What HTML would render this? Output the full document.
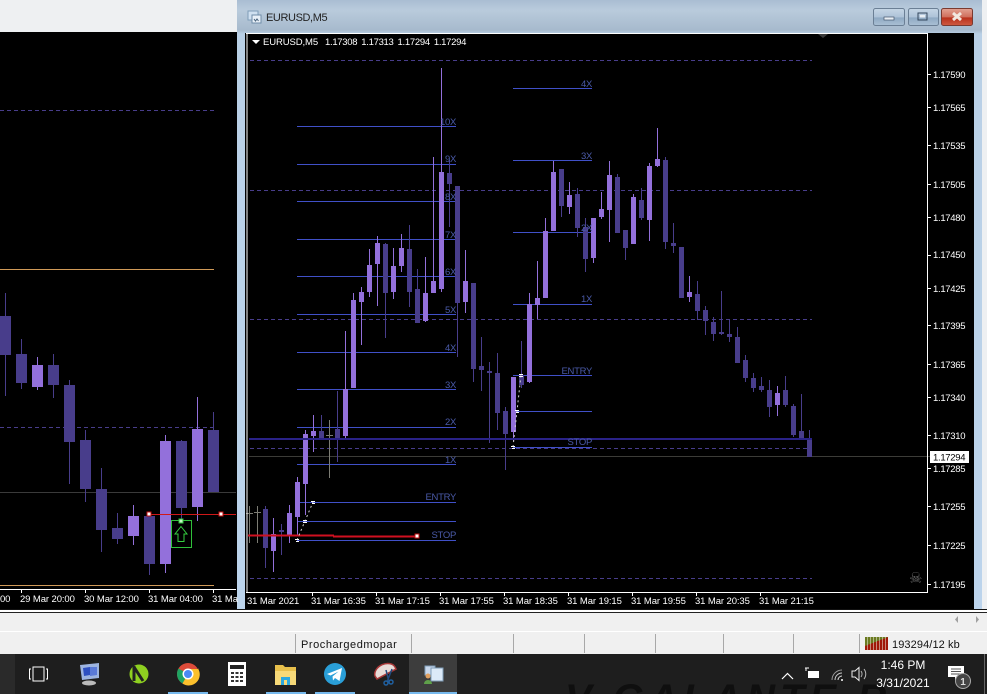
<!DOCTYPE html>
<html><head><meta charset="utf-8"><style>
html,body{margin:0;padding:0;background:#f0f0f0}
#p{position:relative;width:987px;height:694px;overflow:hidden;background:#f0f0f0;font-family:"Liberation Sans",sans-serif}
#p>div{position:absolute}
svg{position:absolute;left:0;top:0}
text{font-family:"Liberation Sans",sans-serif}
</style></head><body><div id="p">
<div style="left:0;top:0;width:237px;height:33px;background:#eef0f2"></div>
<div style="left:0;top:32px;width:237px;height:577px;background:#000"></div>
<div style="left:237px;top:0;width:745px;height:609px;background:linear-gradient(#a9bdd2,#b9cbdc 10px,#a7bacd 30px,#b9d0e6 34px,#bcd4ec)"></div>
<div style="left:245px;top:33px;width:729px;height:576px;background:#000"></div>
<div style="left:982px;top:0;width:5px;height:611px;background:#eef0f2"></div>
<div style="left:0;top:609px;width:987px;height:1px;background:#111"></div>
<div style="left:0;top:610px;width:987px;height:2px;background:#fff"></div>
<div style="left:0;top:612px;width:987px;height:1px;background:#222"></div>
<div style="left:0;top:631px;width:987px;height:1px;background:#fff"></div>
<div style="left:0;top:654px;width:987px;height:40px;background:#1e1e1e"></div>
<div style="left:0;top:654px;width:15px;height:40px;background:#2a2a2a"></div>
<div style="left:409px;top:654px;width:48px;height:40px;background:#3d3d3d"></div>

<svg width="987" height="694" viewBox="0 0 987 694">
<!-- left chart -->
<g shape-rendering="crispEdges">
<path d="M0 110.5H214M0 427.5H214" stroke="#483d8b" stroke-dasharray="4 3" fill="none"/>
<path d="M0 269.5H214M0 585.5H214" stroke="#d09a58" fill="none"/>
<path d="M0 492.5H236" stroke="#3a3a3a" fill="none"/>
<path d="M5.5 293V396M21.5 339V389M53.5 354V398M69.5 380V484M85.5 430V502M101.5 468V552M117.5 513V544M149.5 513V575M181.5 440V520M213.5 412V492" stroke="#483d8b" fill="none"/>
<path d="M37.5 357V390M133.5 505V545M165.5 435V573M197.5 397V521" stroke="#9370db" fill="none"/>
<path d="M5.5 316V355M21.5 354V383M53.5 365V385M69.5 385V442M85.5 440V489M101.5 489V530M117.5 528V539M149.5 516V564M181.5 441V508M213.5 430V492" stroke="#483d8b" stroke-width="11" fill="none"/>
<path d="M37.5 365V387M133.5 516V536M165.5 441V564M197.5 429V507" stroke="#9370db" stroke-width="11" fill="none"/>
<path d="M149 514.5H236" stroke="#d01818" fill="none"/>
<rect x="147" y="512" width="4" height="4" fill="#fff" stroke="#c01010"/>
<rect x="219" y="512" width="4" height="4" fill="#fff" stroke="#c01010"/>
<rect x="171.5" y="520.5" width="20" height="27" fill="none" stroke="#2fc03a"/>
<rect x="179" y="519" width="4" height="4" fill="#c8f8c8" stroke="#2fc03a"/>
<path d="M0 589.5H236M21.5 589V593M85.5 589V593M149.5 589V593M213.5 589V593" stroke="#fff" fill="none"/>
</g>
<path d="M181 526.5l6 7.5h-3v7.5h-6V534h-3z" fill="none" stroke="#35d040"/>
<g fill="#fff" font-size="9.5" letter-spacing="-.1">
<text x="0" y="602">00</text><text x="20" y="602">29 Mar 20:00</text><text x="84" y="602">30 Mar 12:00</text><text x="148" y="602">31 Mar 04:00</text><text x="212" y="602">31 Ma</text>
</g>

<!-- main chart -->
<g shape-rendering="crispEdges" fill="none">
<path d="M250 60.5H812M250 190.5H812M250 319.5H812M250 448.5H812M250 578.5H812" stroke="#483d8b" stroke-dasharray="4 3"/>
<path d="M297 126.5H456M297 164.5H456M297 201.5H456M297 239.5H456M297 276.5H456M297 314.5H456M297 352.5H456M297 389.5H456M297 427.5H456M297 464.5H456M297 502.5H456M297 521.5H456M297 540.5H456M513 88.5H592M513 160.5H592M513 232.5H592M513 304.5H592M513 375.5H592M513 411.5H592M513 447.5H592" stroke="#4050c8"/>
<path d="M249 456.5H927M927 456.5H933" stroke="#3c3c38"/>
<path d="M249.5 506V543M257.5 506V543M329.5 420V478M246 513.5H253M254 512.5H261M326 435.5H333" stroke="#7c7c74"/>
<path d="M265.5 506V568M281.5 524V555M321.5 415V440M337.5 391V462M385.5 243V338M409.5 225V307M417.5 269V323M449.5 160V227M457.5 186V357M473.5 283V382M481.5 337V391M489.5 362V443M497.5 353V430M505.5 407V470M521.5 341V388M561.5 169V217M577.5 188V237M585.5 218V272M617.5 174V233M625.5 230V260M641.5 188V220M665.5 157V249M673.5 223V253M697.5 281V320M705.5 306V335M713.5 317V341M721.5 291V335M729.5 319V342M737.5 327V363M745.5 355V382M753.5 373V392M761.5 377V392M769.5 380V417M785.5 376V407M793.5 404V437M801.5 394V438M809.5 430V457" stroke="#483d8b"/>
<path d="M273.5 518V572M289.5 505V543M297.5 477V535M305.5 430V515M313.5 415V452M345.5 331V440M353.5 293V388M361.5 287V345M369.5 249V297M377.5 236V306M393.5 248V299M401.5 234V272M425.5 257V322M433.5 157V293M441.5 68V292M465.5 250V313M513.5 377V441M529.5 293V383M537.5 261V319M545.5 218V298M553.5 161V231M569.5 182V214M593.5 218V263M601.5 192V219M609.5 161V242M633.5 194V244M649.5 163V241M657.5 128V167M689.5 276V302M777.5 386V416" stroke="#9370db"/>
<path d="M265.5 509V548M281.5 530V532M321.5 431V438M337.5 429V438M385.5 244V293M409.5 249V292M417.5 289V323M449.5 173V184M457.5 186V303M473.5 283V369M481.5 366V370M489.5 371V373M497.5 373V413M505.5 411V434M521.5 375V385M561.5 169V206M577.5 194V228M585.5 227V259M617.5 177V233M625.5 230V248M641.5 200V218M665.5 160V242M673.5 243V246M681.5 247V298M697.5 294V311M705.5 310V321M713.5 322V334M721.5 332V334M729.5 334V337M737.5 337V363M745.5 360V378M753.5 378V388M761.5 386V390M769.5 390V407M785.5 390V405M793.5 406V435M801.5 431V438M809.5 438V457" stroke="#483d8b" stroke-width="5"/>
<path d="M273.5 534V551M289.5 513V535M297.5 482V517M305.5 434V484M313.5 431V436M345.5 389V436M353.5 300V388M361.5 292V302M369.5 265V292M377.5 243V264M393.5 266V292M401.5 248V266M425.5 293V321M433.5 281V293M441.5 172V289M465.5 281V302M513.5 377V432M529.5 304V382M537.5 298V305M545.5 231V298M553.5 172V231M569.5 195V207M593.5 218V258M601.5 209V217M609.5 175V210M633.5 197V244M649.5 166V220M657.5 159V166M689.5 292V297M777.5 393V405" stroke="#9370db" stroke-width="5"/>
<path d="M249 439H812" stroke="#2a2288" stroke-width="2"/>
<rect x="248" y="534.500" width="86" height="2" fill="#d01020"/>
<rect x="333" y="535.500" width="84" height="2" fill="#d01020"/>
<rect x="415" y="534" width="4" height="4" fill="#fff" stroke="#c01010"/>
<path d="M297 540L305 521L313 502M513 447L517 411L521 375" stroke="#cfcfcf" stroke-dasharray="2 3" shape-rendering="auto"/>
<path d="M295 539.500H299M296 541.500H299M303 520.500H307M303 522.500H307M311 501.500H315M312 503.500H315M511 446.500H515M512 448.500H515M515 410.500H519M516 412.500H519M519 374.500H523M519 376.500H523" stroke="#fff"/>
<path d="M247 33V593M246 33.500H928M927.500 33V593M246 592.500H928" stroke="#fff"/>
<path d="M928 74.500H931M928 107.500H931M928 145.500H931M928 184.500H931M928 217.500H931M928 255.500H931M928 288.500H931M928 325.500H931M928 364.500H931M928 397.500H931M928 435.500H931M928 468.500H931M928 506.500H931M928 545.500H931M928 584.500H931" stroke="#fff"/>
<path d="M312.500 592V596M376.500 592V596M440.500 592V596M504.500 592V596M568.500 592V596M632.500 592V596M696.500 592V596M760.500 592V596" stroke="#fff"/>
</g>
<path d="M818 34h10l-5 4z" fill="#3a3a3a"/>
<g fill="#4a5aa8" font-size="9.5" letter-spacing="-.3" text-anchor="end">
<text x="456" y="125">10X</text><text x="456" y="162">9X</text><text x="456" y="200">8X</text><text x="456" y="238">7X</text><text x="456" y="275">6X</text><text x="456" y="313">5X</text><text x="456" y="351">4X</text><text x="456" y="388">3X</text><text x="456" y="425">2X</text><text x="456" y="463">1X</text><text x="456" y="500">ENTRY</text><text x="456" y="538">STOP</text>
<text x="592" y="87">4X</text><text x="592" y="159">3X</text><text x="592" y="231">2X</text><text x="592" y="302">1X</text><text x="592" y="374">ENTRY</text><text x="592" y="445">STOP</text>
</g>
<path d="M252 40h8l-4 4z" fill="#fff"/>
<g fill="#fff" font-size="9.5" letter-spacing="-.1">
<text x="263" y="45">EURUSD,M5</text>
<text x="325" y="45" letter-spacing="-.3" word-spacing="1.7">1.17308 1.17313 1.17294 1.17294</text>
<text x="247" y="604">31 Mar 2021</text><text x="311" y="604">31 Mar 16:35</text><text x="375" y="604">31 Mar 17:15</text><text x="439" y="604">31 Mar 17:55</text><text x="503" y="604">31 Mar 18:35</text><text x="567" y="604">31 Mar 19:15</text><text x="631" y="604">31 Mar 19:55</text><text x="695" y="604">31 Mar 20:35</text><text x="759" y="604">31 Mar 21:15</text>
</g>
<g fill="#fff" font-size="9.5" letter-spacing="-.3">
<text x="933" y="78">1.17590</text><text x="933" y="111">1.17565</text><text x="933" y="149">1.17535</text><text x="933" y="188">1.17505</text><text x="933" y="221">1.17480</text><text x="933" y="258">1.17450</text><text x="933" y="292">1.17425</text><text x="933" y="329">1.17395</text><text x="933" y="368">1.17365</text><text x="933" y="401">1.17340</text><text x="933" y="439">1.17310</text><text x="933" y="472">1.17285</text><text x="933" y="510">1.17255</text><text x="933" y="549">1.17225</text><text x="933" y="588">1.17195</text>
</g>
<rect x="930" y="451" width="39" height="12" fill="#fff"/>
<text x="933" y="460.500" fill="#000" font-size="9.5" letter-spacing="-.3">1.17294</text>
<text x="909" y="583" fill="#6a6a6a" font-size="15" style='font-family:"DejaVu Sans",sans-serif'>☠</text>

<!-- title bar -->
<g>
<rect x="248" y="11" width="10" height="9" fill="#cfe0f0" stroke="#7f9db8"/>
<rect x="252" y="15" width="9" height="8" fill="#e8f0f8" stroke="#6f8da8"/>
<path d="M254 19l1.500 2 1.500-2 1.500 2" stroke="#47617b" fill="none"/>
<text x="266" y="21" font-size="11" letter-spacing="-.4" fill="#222">EURUSD,M5</text>
<defs>
<linearGradient id="bt" x1="0" y1="0" x2="0" y2="1"><stop offset="0" stop-color="#c6d6e6"/><stop offset=".5" stop-color="#aec3d8"/><stop offset=".55" stop-color="#8fa9c3"/><stop offset="1" stop-color="#aac0d4"/></linearGradient>
<linearGradient id="bc" x1="0" y1="0" x2="0" y2="1"><stop offset="0" stop-color="#e3a394"/><stop offset=".5" stop-color="#cf6f5c"/><stop offset=".55" stop-color="#b8311c"/><stop offset="1" stop-color="#cf5a40"/></linearGradient>
</defs>
<rect x="873.500" y="8.500" width="31" height="17" rx="2" fill="url(#bt)" stroke="#6b7f95"/>
<rect x="908.500" y="8.500" width="30" height="17" rx="2" fill="url(#bt)" stroke="#6b7f95"/>
<rect x="941.500" y="8.500" width="31" height="17" rx="2" fill="url(#bc)" stroke="#7a3a30"/>
<rect x="884" y="17" width="10" height="3" fill="#e8eef4" stroke="#44546a" stroke-width=".7"/>
<rect x="918" y="13" width="9" height="7" fill="none" stroke="#33465c" stroke-width="1"/>
<rect x="920" y="15" width="5" height="2.500" fill="#e8eef4"/>
<path d="M953 13l8 7M961 13l-8 7" stroke="#f2e8e0" stroke-width="3"/>
</g>

<!-- status bars -->
<path d="M955 619.500l3-3.500v7zM979 619.500l-3-3.500v7z" fill="#a0a0a0"/>
<g shape-rendering="crispEdges"><path d="M295.500 634V653M411.500 634V653M513.500 634V653M584.500 634V653M655.500 634V653M723.500 634V653M793.500 634V653M859.500 634V653" stroke="#a8a8a8"/>
<rect x="865" y="637" width="23" height="13" fill="#6a7a20"/>
<path d="M865 650V646L888 637V650z" fill="#a01808"/>
<path d="M867.500 637V650M870.500 637V650M873.500 637V650M876.500 637V650M879.500 637V650M882.500 637V650M885.500 637V650" stroke="#e8e8d8" stroke-opacity=".55" fill="none"/></g>
<text x="301" y="648" font-size="11" letter-spacing=".55" fill="#111">Prochargedmopar</text>
<text x="892" y="648" font-size="11" letter-spacing=".1" fill="#111">193294/12 kb</text>

<!-- taskbar -->
<text x="565" y="712" font-size="40" font-style="italic" font-weight="bold" fill="#0f0f0f" letter-spacing="5">V GALANTE R</text>
<g shape-rendering="crispEdges"><rect x="33" y="667" width="11" height="14" fill="none" stroke="#fff"/><path d="M31 669h-1.500v10H31M46 669h1.500v10H46" stroke="#fff" fill="none"/>
<rect x="168" y="692" width="40" height="2" fill="#76b9ed"/><rect x="266" y="692" width="40" height="2" fill="#76b9ed"/><rect x="315" y="692" width="40" height="2" fill="#76b9ed"/><rect x="409" y="692" width="48" height="2" fill="#76b9ed"/></g>
<!-- system icon -->
<path d="M80 665l19-2v15l-17 2z" fill="#9db4e0"/><path d="M83 668l7-1v8l-6 1z" fill="#2d4fc0"/><path d="M90 667l7 0v8l-7 1z" fill="#5a7ad8"/><ellipse cx="89" cy="683" rx="7" ry="2.500" fill="#bbb"/>
<!-- N icon -->
<circle cx="139" cy="674" r="9.500" fill="#8ed020"/><path d="M134 666v15M134 667l9 14" stroke="#222" stroke-width="3" fill="none"/>
<!-- chrome -->
<circle cx="188" cy="674" r="11" fill="#dd4b39"/><path d="M188 674L178.500 668.500A11 11 0 0 0 182.500 683.500z" fill="#1da462"/><path d="M188 674l-5.500 9.500A11 11 0 0 0 198 668.500L199 669H188z" fill="#fbc02d"/><circle cx="188" cy="674" r="5.500" fill="#fff"/><circle cx="188" cy="674" r="4" fill="#4a8af4"/>
<!-- calculator -->
<rect x="228" y="662" width="18" height="24" fill="#fff"/><rect x="230" y="665" width="14" height="4" fill="#222"/><path d="M231 672h3v2h-3zM235.500 672h3v2h-3zM240 672h3v2h-3zM231 676h3v2h-3zM235.500 676h3v2h-3zM240 676h3v2h-3zM231 680h3v2h-3zM235.500 680h3v2h-3zM240 680h3v2h-3z" fill="#333"/>
<!-- folder -->
<path d="M275 665h8l2 2h11v18h-21z" fill="#e8c04c"/><path d="M275 671h21v14h-21z" fill="#f6d978"/><path d="M281 680h9v-3h-9zM281 680h3v5h-3zM287 680h3v5h-3z" fill="#29a8e0"/>
<!-- telegram -->
<circle cx="335" cy="674" r="11" fill="#2a9fd8"/><path d="M327 674l15-6-2.500 13-4.500-3-2 2.500-.5-4 6-5-8 4z" fill="#fff"/>
<!-- snipping -->
<path d="M375 676a11 8 -25 0 1 20-9l1 2-19 10z" fill="#e8dcd8" stroke="#a83838" stroke-width="1.500"/><path d="M386 670l3 12M392 669l-5 13" stroke="#204a80" stroke-width="1.500"/><circle cx="386" cy="683" r="2" fill="none" stroke="#2060a0" stroke-width="1.500"/><circle cx="391" cy="682" r="2" fill="none" stroke="#2060a0" stroke-width="1.500"/>
<!-- active app -->
<rect x="425" y="666" width="10" height="9" fill="#c8d8ec" stroke="#7f9db8"/><rect x="431" y="668" width="12" height="13" fill="#dceaf8" stroke="#7f9db8"/><circle cx="428" cy="676" r="2.500" fill="#e0a060"/><path d="M424 684a4 4 0 0 1 8 0z" fill="#5fa04a"/>
<!-- tray -->
<path d="M782 679l5.500-5.500 5.500 5.500" stroke="#fff" stroke-width="1.200" fill="none"/>
<rect x="808" y="671" width="11" height="7" fill="#fff"/><path d="M805 668h4M806 668v3" stroke="#fff" fill="none"/>
<path d="M832 680a10 10 0 0 1 10-10" stroke="#999" fill="none"/><path d="M835 680a7 7 0 0 1 7-7" stroke="#ccc" fill="none"/><path d="M838 680a4 4 0 0 1 4-4" stroke="#ddd" fill="none"/><circle cx="842" cy="680" r="1" fill="#fff"/>
<path d="M852 671h3l4-3.500v13l-4-3.500h-3z" stroke="#eee" fill="none"/><path d="M861 671a5 5 0 0 1 0 6M864 669a8 8 0 0 1 0 10" stroke="#bbb" fill="none"/>
<text x="903" y="669" fill="#fff" font-size="12" text-anchor="middle">1:46 PM</text>
<text x="903" y="687" fill="#fff" font-size="12" text-anchor="middle">3/31/2021</text>
<path d="M948 666h16v11h-6l-3 3v-3h-7z" fill="#fff"/><path d="M951 669h10M951 671.500h10M951 674h10" stroke="#555"/>
<circle cx="963" cy="681" r="7.500" fill="#444" stroke="#aaa"/><text x="963" y="685" fill="#ddd" font-size="10" font-weight="bold" text-anchor="middle">1</text>
<path d="M984.500 654V694" stroke="#666"/>
</svg>
</div></body></html>
